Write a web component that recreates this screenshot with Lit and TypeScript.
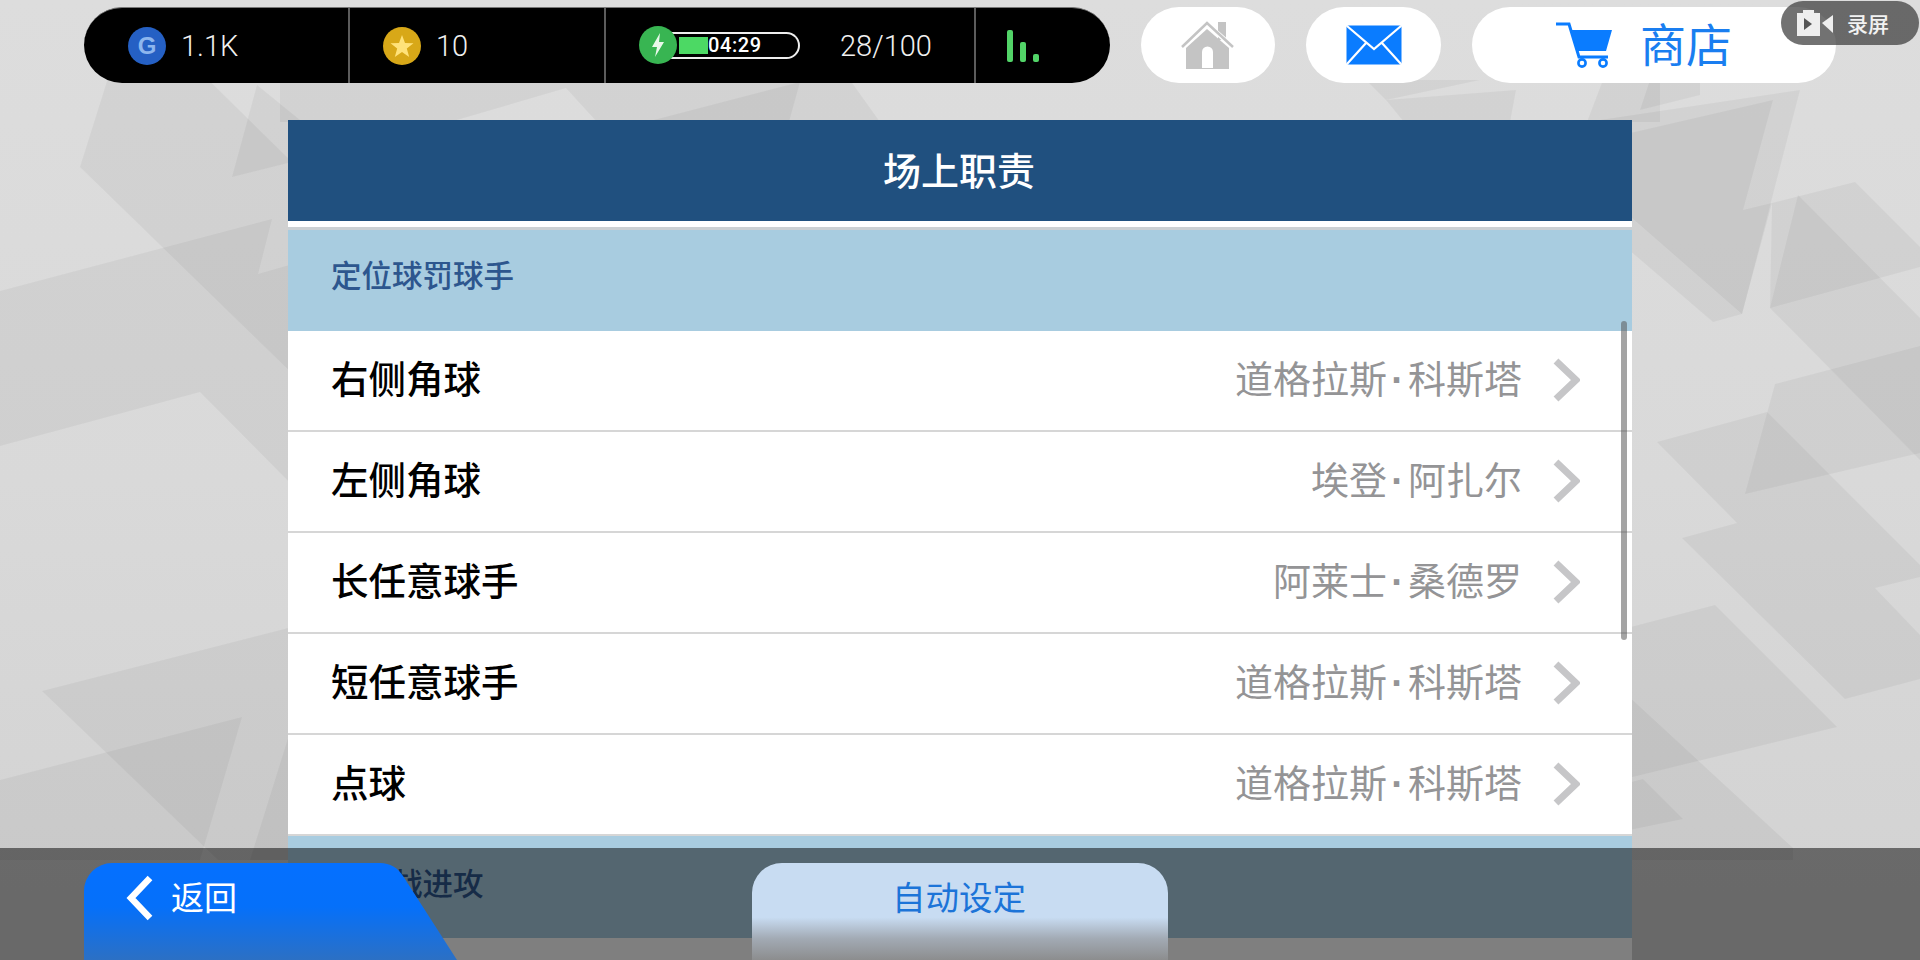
import { LitElement, html, css, svg } from "lit";
import { customElement } from "lit/decorators.js";

const CJK = `"Noto Sans CJK SC", "Noto Sans", sans-serif`;

const BG_POLYS = [
  "120,40 80,167 300,381 300,170 168,40",
  "257,85 232,177 300,160 300,120",
  "0,291 272,219 258,274 300,262 300,493 200,392 0,446",
  "42,691 300,625 300,860 218,860",
  "0,780 242,717 200,860 0,860",
  "300,700 250,860 300,860",
  "1600,120 1800,90 1742,314 1713,322 1600,225",
  "1600,140 1773,100 1743,210 1772,203 1742,314 1600,190",
  "1772,203 1855,182 1920,247 1920,267 1770,308",
  "1798,195 1920,318 1920,460 1770,308",
  "1775,384 1920,346 1920,453 1745,494",
  "1657,442 1767,412 1828,473 1920,565 1920,577 1875,588 1920,635 1920,679 1845,699 1682,538 1737,523",
  "1600,635 1715,605 1837,727 1600,785",
  "1600,670 1793,848 1793,860 1600,860",
  "1600,790 1643,779 1683,819 1600,836",
  "280,80 850,80 880,122 597,122 566,88 450,122 280,122",
  "646,122 800,82 789,122",
  "1386,100 1516,90 1510,122 1404,122",
  "1366,80 1386,100 1480,80",
  "1603,80 1660,80 1660,122 1587,122",
  "1650,80 1640,110 1700,95 1700,80",
];

const ROWS = [
  { name: "右侧角球", player: "道格拉斯·科斯塔" },
  { name: "左侧角球", player: "埃登·阿扎尔" },
  { name: "长任意球手", player: "阿莱士·桑德罗" },
  { name: "短任意球手", player: "道格拉斯·科斯塔" },
  { name: "点球", player: "道格拉斯·科斯塔" },
];

@customElement("app-root")
export class AppRoot extends LitElement {
  static styles = css`
    :host {
      display: block;
      position: relative;
      width: 1920px;
      height: 960px;
      overflow: hidden;
      background: linear-gradient(180deg, #dddddd 0%, #d9d9d9 50%, #d2d2d2 100%);
      font-family: ${css([CJK] as any)};
    }
    .bg { position: absolute; inset: 0; width: 1920px; height: 960px; }
    .bg polygon { fill: rgba(0, 0, 0, 0.045); }
    .page { position: relative; display: flex; flex-direction: column; height: 960px; }

    .top { display: flex; gap: 31px; padding: 7px 0 0 84px; height: 76px; }
    .bar {
      display: flex;
      height: 76px;
      box-sizing: border-box;
      width: 1026px;
      background: #000;
      border-top: 1px solid #777;
      border-radius: 38px;
      overflow: hidden;
      color: #f0f0f0;
      font-family: Roboto, sans-serif;
      font-weight: 300;
      font-size: 29px;
    }
    .cell { display: flex; align-items: center; box-sizing: border-box; flex: none; }
    .cell + .cell { border-left: 2px solid #5c5c5c; }
    .c1 { width: 264px; padding-left: 44px; gap: 15px; }
    .c2 { width: 256px; padding-left: 33px; gap: 15px; }
    .c3 { width: 370px; padding-left: 33px; }
    .c4 { width: 136px; padding-left: 31px; align-items: flex-end; padding-bottom: 21px; gap: 7px; }
    .coin {
      width: 38px; height: 38px; border-radius: 50%;
      display: flex; align-items: center; justify-content: center; flex: none;
    }
    .coin.g {
      background: #2560c4; color: #8db6ee;
      font: 700 24px "Liberation Sans", sans-serif;
    }
    .coin.s { background: #d8a818; }
    .coin.e { background: #38b552; position: absolute; left: 0; top: -6px; }
    .energy { position: relative; width: 161px; height: 27px; flex: none; }
    .track {
      position: absolute; left: 19px; right: 0; top: 0; bottom: 0;
      box-sizing: border-box;
      border: 2px solid #eee; border-left: none;
      border-radius: 0 14px 14px 0;
    }
    .fill { position: absolute; left: 40px; top: 5px; width: 29px; height: 17px; background: #4cd964; }
    .time {
      position: absolute; left: 69px; top: 0; height: 27px;
      font: 500 20px/27px Roboto, sans-serif; letter-spacing: 0.6px; color: #fff;
    }
    .count { margin-left: 40px; }
    .sig { width: 6px; background: #52d468; border-radius: 2px; }

    .pill {
      height: 76px; background: #fff; border-radius: 38px;
      display: flex; align-items: center; justify-content: center; flex: none;
    }
    .home { width: 134px; }
    .mail { width: 135px; }
    .shop { width: 364px; gap: 27px; color: #1a7ef0; font-size: 46px; padding-right: 20px; box-sizing: border-box; }
    .shop span { margin-bottom: 6px; }

    .panel {
      margin: 37px 0 0 288px; width: 1344px; flex: 1;
      background: #fff; overflow: hidden; position: relative;
    }
    .head {
      height: 101px; background: #20507f; color: #fff; box-sizing: border-box;
      font-size: 38px; font-weight: 500; display: flex; align-items: center; justify-content: center;
      padding: 0 2px 5px 0;
    }
    .gap { height: 6px; background: #fff; border-bottom: 3px solid #ccd0d3; }
    .section {
      height: 101px; background: #a8cce0; color: #2d568e;
      font-size: 30.5px; font-weight: 500; display: flex; align-items: center; padding-left: 43px; padding-bottom: 14px; box-sizing: border-box;
    }
    .section.second { height: 102px; padding-bottom: 10px; }
    .row {
      height: 101px; box-sizing: border-box; border-bottom: 2px solid #d6d6d6;
      display: flex; align-items: center; padding: 0 52px 0 43px; gap: 31px;
      background: #fff;
    }
    .name { flex: 1; font-size: 37.5px; font-weight: 500; color: #000; margin-bottom: 8px; }
    .player { font-size: 38px; color: #949496; margin-bottom: 8px; display: flex; align-items: baseline; }
    .dot { width: 21px; text-align: center; font-family: "Liberation Sans", sans-serif; font-weight: 700; }
    .scroll {
      position: absolute; right: 5px; top: 201px; width: 6px; height: 319px;
      border-radius: 3px; background: rgba(90, 90, 90, 0.55);
    }

    .rec {
      position: absolute; left: 1781px; top: 1px; width: 138px; height: 44px;
      border-radius: 22px; background: rgba(60, 60, 60, 0.72);
      display: flex; align-items: center; gap: 13px; padding-left: 16px; box-sizing: border-box;
      color: #f2f2f2; font-size: 21px; font-weight: 500;
    }

    .dock { position: absolute; left: 0; right: 0; top: 848px; height: 112px; background: rgba(0, 0, 0, 0.5); }
    .back {
      position: absolute; left: 84px; top: 15px; width: 373px; height: 97px;
      display: flex; color: #fff; font-size: 33px;
    }
    .back svg.shape { position: absolute; inset: 0; }
    .back-in { position: relative; display: flex; align-items: center; gap: 17px; padding-left: 42px; height: 70px; }
    .back-in span { margin-bottom: 5px; }
    .auto {
      position: absolute; left: 752px; top: 15px; width: 416px; height: 97px;
      border-radius: 30px 30px 0 0;
      background: linear-gradient(180deg, #c8dcf2 0%, #c8dcf2 56%, #a2aab4 78%, #8c8d8e 100%);
      color: #1c74d8; font-size: 33.5px;
      display: flex; justify-content: center; padding: 8px 2px 0 0; box-sizing: border-box;
    }
  `;

  private chevron() {
    return html`<svg width="27" height="44" viewBox="0 0 27 44" style="flex:none;margin-bottom:2px">
      <path d="M3 3 L23 22 L3 41" fill="none" stroke="#c6c6c8" stroke-width="7" />
    </svg>`;
  }

  private player(name: string) {
    const [a, b] = name.split("·");
    return html`<span class="player"><span>${a}</span><span class="dot">·</span><span>${b}</span></span>`;
  }

  render() {
    return html`
      <svg class="bg" viewBox="0 0 1920 960">
        ${BG_POLYS.map((p) => svg`<polygon points=${p}></polygon>`)}
      </svg>
      <div class="page">
        <div class="top">
          <div class="bar">
            <div class="cell c1"><span class="coin g">G</span><span>1.1K</span></div>
            <div class="cell c2">
              <span class="coin s">
                <svg width="24" height="24" viewBox="0 0 24 24"><polygon fill="#ffe27a" points="12,1 15,9 23.5,9.3 16.8,14.5 19.2,23 12,18 4.8,23 7.2,14.5 0.5,9.3 9,9"/></svg>
              </span>
              <span>10</span>
            </div>
            <div class="cell c3">
              <div class="energy">
                <div class="track"></div>
                <div class="fill"></div>
                <span class="time">04:29</span>
                <span class="coin e">
                  <svg width="18" height="26" viewBox="0 0 18 26"><polygon fill="#e8f8ea" points="11,1 3,15 8,15 6,25 15,10 10,10"/></svg>
                </span>
              </div>
              <span class="count">28/100</span>
            </div>
            <div class="cell c4">
              <span class="sig" style="height:32px"></span>
              <span class="sig" style="height:20px"></span>
              <span class="sig" style="height:8px"></span>
            </div>
          </div>

          <div class="pill home">
            <svg width="56" height="50" viewBox="0 0 56 50">
              <rect x="38" y="2" width="8" height="18" fill="#c4c4c4" />
              <path d="M2 27 L27 4 L53 27" fill="none" stroke="#fff" stroke-width="5" />
              <path d="M2 27 L27 3 L53 27" fill="none" stroke="#c4c4c4" stroke-width="2.5" />
              <path d="M6 28 L27 9 L49 28 V49 H6 Z" fill="#c4c4c4" />
              <path d="M22 48 V32 a5.5 5.5 0 0 1 11 0 V48 Z" fill="#fff" />
            </svg>
          </div>
          <div class="pill mail">
            <svg width="56" height="40" viewBox="0 0 56 40">
              <rect x="0.5" y="0.5" width="55" height="39" rx="2" fill="#0a7cff" />
              <path d="M1 1 L28 24 L55 1 M1 39 L20 18 M55 39 L36 18" fill="none" stroke="#fff" stroke-width="2.2" />
            </svg>
          </div>
          <div class="pill shop">
            <svg width="57" height="46" viewBox="0 0 57 46">
              <path d="M0 2 H13 L23 35 H52" fill="none" stroke="#0a7cff" stroke-width="3" />
              <polygon fill="#0a7cff" points="15,8 56,8 50,29 21,29" />
              <circle cx="26" cy="41" r="3.6" fill="none" stroke="#0a7cff" stroke-width="2.6" />
              <circle cx="47" cy="41" r="3.6" fill="none" stroke="#0a7cff" stroke-width="2.6" />
            </svg>
            <span>商店</span>
          </div>
        </div>

        <div class="panel">
          <div class="head">场上职责</div>
          <div class="gap"></div>
          <div class="section">定位球罚球手</div>
          ${ROWS.map(
            (r) => html`<div class="row">
              <span class="name">${r.name}</span>
              ${this.player(r.player)}
              ${this.chevron()}
            </div>`,
          )}
          <div class="section second">阵地战进攻</div>
          <div class="row"></div>
          <div class="scroll"></div>
        </div>
      </div>

      <div class="rec">
        <svg width="37" height="26" viewBox="0 0 37 26">
          <path d="M6 0 H17 V3 H23 V26 H0 V3 H6 Z" fill="#eee" />
          <polygon points="7,8 15,14 7,20" fill="#555" />
          <polygon points="25,13 36,5 36,23" fill="#eee" />
        </svg>
        <span>录屏</span>
      </div>

      <div class="dock">
        <div class="auto">自动设定</div>
        <div class="back">
          <svg class="shape" width="373" height="97" viewBox="0 0 373 97">
            <defs>
              <linearGradient id="bk" x1="0" y1="0" x2="0" y2="1">
                <stop offset="0" stop-color="#0570ff" />
                <stop offset="0.45" stop-color="#0570fa" />
                <stop offset="1" stop-color="#2c70c4" />
              </linearGradient>
            </defs>
            <path d="M0 97 V28 A28 28 0 0 1 28 0 H296 C306 0 314 5 319 13 L373 97 Z" fill="url(#bk)" />
          </svg>
          <div class="back-in">
            <svg width="28" height="46" viewBox="0 0 28 46" style="flex:none">
              <path d="M24 3 L5 23 L24 43" fill="none" stroke="#fff" stroke-width="6.5" />
            </svg>
            <span>返回</span>
          </div>
        </div>
      </div>
    `;
  }
}
